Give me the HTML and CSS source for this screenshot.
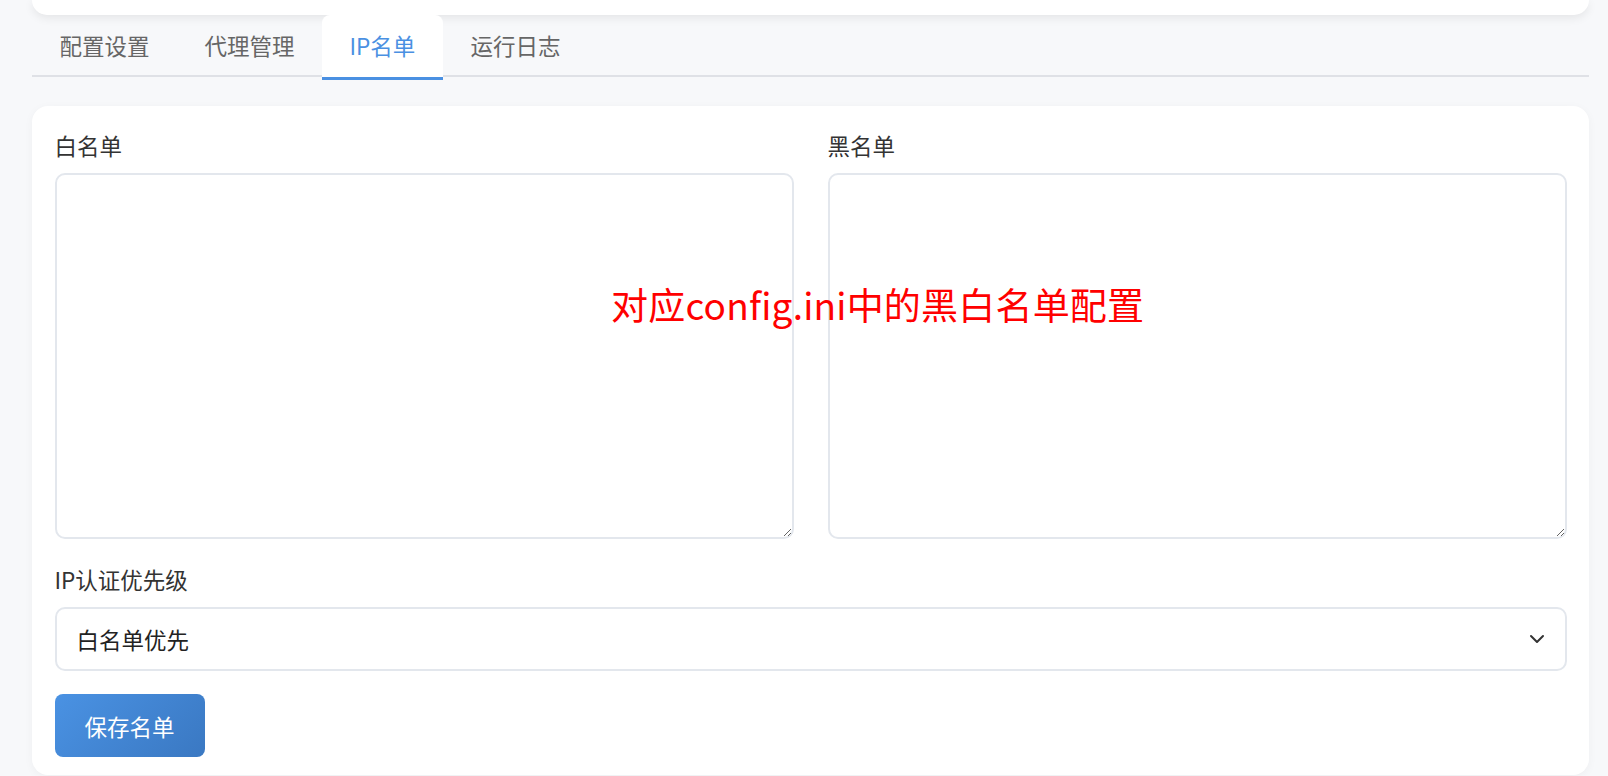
FILE: index.html
```html
<!DOCTYPE html>
<html lang="zh-CN">
<head>
<meta charset="utf-8">
<title>IP名单</title>
<link rel="stylesheet" href="styles.css">
</head>
<body>
<div class="page">
  <div class="top-card"></div>
  <nav class="tabs">
    <div class="tab">配置设置</div>
    <div class="tab">代理管理</div>
    <div class="tab active">IP名单</div>
    <div class="tab">运行日志</div>
  </nav>
  <section class="card">
    <div class="lists">
      <div class="field">
        <label class="label">白名单</label>
        <textarea class="list-input"></textarea>
      </div>
      <div class="field">
        <label class="label">黑名单</label>
        <textarea class="list-input"></textarea>
      </div>
    </div>
    <div class="field priority">
      <label class="label">IP认证优先级</label>
      <div class="select-wrap">
        <select class="select">
          <option>白名单优先</option>
          <option>黑名单优先</option>
        </select>
        <svg class="chevron" width="18" height="18" viewBox="0 0 18 18"><path d="M3 6 L9 12 L15 6" fill="none" stroke="#333" stroke-width="2" stroke-linecap="round" stroke-linejoin="round"/></svg>
      </div>
    </div>
    <button class="save-btn">保存名单</button>
  </section>
  <div class="annotation">对应config.ini中的黑白名单配置</div>
</div>
</body>
</html>
```

FILE: styles.css
```css
* { box-sizing: border-box; }
html, body {
  margin: 0;
  padding: 0;
  background: #f7f8fa;
  height: 776px;
  overflow: hidden;
}
body {
  font-family: "Noto Sans CJK SC", "Noto Sans", sans-serif;
  color: #333;
}
.page {
  position: relative;
  padding: 0 19px 0 32px;
}
.top-card {
  height: 15px;
  background: #fff;
  border-radius: 0 0 16px 16px;
  box-shadow: 0 3px 10px rgba(0, 0, 0, 0.08);
}
.tabs {
  display: flex;
  border-bottom: 2px solid #dfe1e6;
  height: 62px;
}
.tab {
  padding: 13px 27.5px 0;
  font-size: 22.5px;
  line-height: 34px;
  color: #666;
  height: 65px;
}
.tab.active {
  background: #fff;
  color: #4a90e2;
  border-radius: 8px 8px 0 0;
  border-bottom: 3px solid #4a90e2;
}
.card {
  margin-top: 29px;
  background: #fff;
  border-radius: 16px;
  padding: 22px 22.5px 18px;
  box-shadow: 0 2px 10px rgba(0, 0, 0, 0.04);
}
.lists {
  display: grid;
  grid-template-columns: 1fr 1fr;
  column-gap: 34px;
}
.field {
  display: flex;
  flex-direction: column;
}
.label {
  font-size: 22.5px;
  line-height: 34px;
  color: #333;
  margin-bottom: 11px;
}
.list-input {
  height: 366px;
  border: 2px solid #e3e7ed;
  border-radius: 10px;
  resize: vertical;
  font-family: inherit;
  font-size: 18px;
  padding: 12px;
  outline: none;
}
.priority {
  margin-top: 23px;
}
.select-wrap {
  position: relative;
}
.select {
  appearance: none;
  -webkit-appearance: none;
  width: 100%;
  height: 64px;
  border: 2px solid #e3e7ed;
  border-radius: 10px;
  background: #fff;
  font-family: inherit;
  font-size: 22.5px;
  color: #222;
  padding: 0 20px;
  outline: none;
}
.chevron {
  position: absolute;
  right: 21px;
  top: 23px;
}
.save-btn {
  margin-top: 23px;
  width: 150px;
  height: 63px;
  border: none;
  border-radius: 8px;
  background: linear-gradient(135deg, #4a92e3, #3a78c2);
  color: #fff;
  font-family: inherit;
  font-size: 22.5px;
}
.annotation {
  position: absolute;
  left: 611px;
  top: 279px;
  font-size: 37px;
  letter-spacing: 0.2px;
  line-height: 50px;
  color: #ff0000;
  white-space: nowrap;
}
```
